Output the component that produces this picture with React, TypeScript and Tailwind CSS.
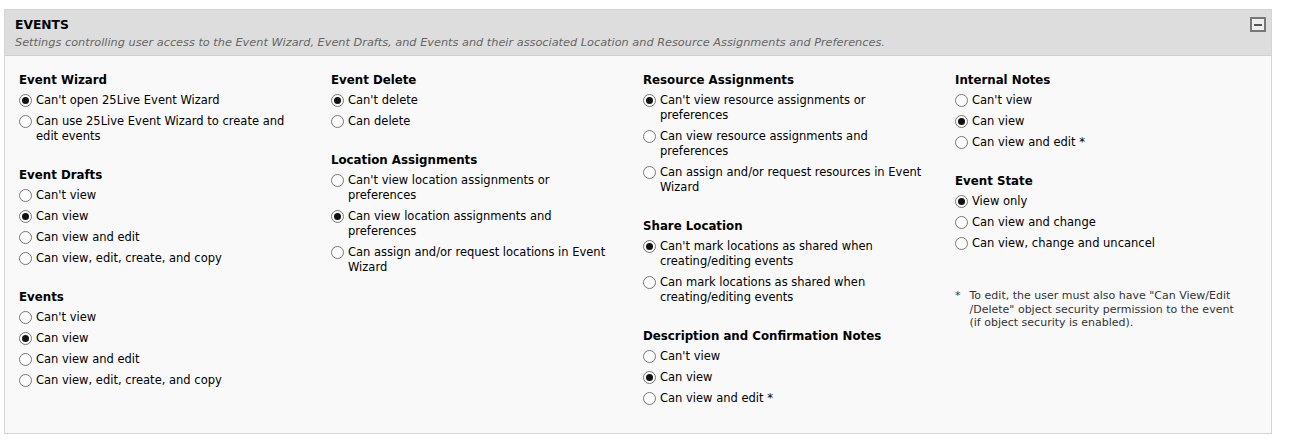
import React from "react"

type Group = { title: string; options: string[]; selected: number }

const columns: Group[][] = [
  [
    { title: "Event Wizard", selected: 0, options: ["Can't open 25Live Event Wizard", "Can use 25Live Event Wizard to create and edit events"] },
    { title: "Event Drafts", selected: 1, options: ["Can't view", "Can view", "Can view and edit", "Can view, edit, create, and copy"] },
    { title: "Events", selected: 1, options: ["Can't view", "Can view", "Can view and edit", "Can view, edit, create, and copy"] },
  ],
  [
    { title: "Event Delete", selected: 0, options: ["Can't delete", "Can delete"] },
    {
      title: "Location Assignments",
      selected: 1,
      options: [
        "Can't view location assignments or preferences",
        "Can view location assignments and preferences",
        "Can assign and/or request locations in Event Wizard",
      ],
    },
  ],
  [
    {
      title: "Resource Assignments",
      selected: 0,
      options: [
        "Can't view resource assignments or preferences",
        "Can view resource assignments and preferences",
        "Can assign and/or request resources in Event Wizard",
      ],
    },
    {
      title: "Share Location",
      selected: 0,
      options: ["Can't mark locations as shared when creating/editing events", "Can mark locations as shared when creating/editing events"],
    },
    { title: "Description and Confirmation Notes", selected: 1, options: ["Can't view", "Can view", "Can view and edit *"] },
  ],
  [
    { title: "Internal Notes", selected: 1, options: ["Can't view", "Can view", "Can view and edit *"] },
    { title: "Event State", selected: 0, options: ["View only", "Can view and change", "Can view, change and uncancel"] },
  ],
]

function Radio({ checked }: { checked: boolean }) {
  return (
    <span className="mt-[1px] flex h-[13px] w-[13px] shrink-0 items-center justify-center rounded-full border border-[#767676] bg-white">
      {checked && <span className="h-[7px] w-[7px] rounded-full bg-[#111]" />}
    </span>
  )
}

function SettingGroup({ group }: { group: Group }) {
  return (
    <div className="mb-[23px]">
      <div className="mb-[4px] text-[11.8px] font-bold leading-[17px] text-black">{group.title}</div>
      <div className="flex flex-col gap-[6px]">
        {group.options.map((opt, i) => (
          <label key={opt} className="flex gap-[4px] text-[11.5px] leading-[15px] text-black">
            <Radio checked={i === group.selected} />
            <span>{opt}</span>
          </label>
        ))}
      </div>
    </div>
  )
}

export default function App() {
  return (
    <div className="h-[442px] w-[1295px] bg-white pl-[4px] pt-[9px]" style={{ fontFamily: '"DejaVu Sans", Verdana, sans-serif' }}>
      <div className="h-[425px] w-[1268px] border border-[#d4d4d4] bg-[#f9f9f9]">
        <div className="flex h-[46px] items-start justify-between border-b border-[#cfcfcf] bg-[#dddddd] pl-[10px] pr-[5px]">
          <div>
            <div className="mt-[7px] text-[12.3px] font-bold leading-[16px] text-black">EVENTS</div>
            <div className="mt-[3px] text-[11.3px] italic leading-[14px] text-[#666]">
              Settings controlling user access to the Event Wizard, Event Drafts, and Events and their associated Location and Resource Assignments and Preferences.
            </div>
          </div>
          <button className="mt-[7px] flex h-[15px] w-[16px] items-center justify-center border-2 border-[#777] bg-[#eeeeee]">
            <span className="h-[2px] w-[8px] bg-[#555]" />
          </button>
        </div>
        <div className="flex pl-[14px] pt-[16px]">
          {columns.map((col, ci) => (
            <div key={ci} className="w-[312px] shrink-0 pr-[32px]">
              {col.map((g) => (
                <SettingGroup key={g.title} group={g} />
              ))}
              {ci === 3 && (
                <div className="mt-[38px] flex gap-[9px] text-[11px] leading-[13.5px] text-[#333]">
                  <span>*</span>
                  <span>
                    To edit, the user must also have "Can View/Edit /Delete" object security permission to the event (if object security is enabled).
                  </span>
                </div>
              )}
            </div>
          ))}
        </div>
      </div>
    </div>
  )
}
